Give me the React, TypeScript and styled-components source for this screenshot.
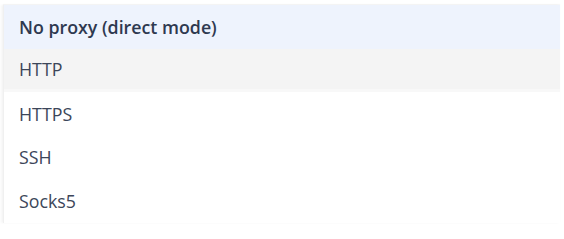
import React from "react";
import styled, { createGlobalStyle } from "styled-components";

const Global = createGlobalStyle`
  html, body { margin: 0; padding: 0; background: #ffffff; }
  body { font-family: "Open Sans", "Noto Sans", sans-serif; }
`;

const Page = styled.div`
  width: 564px;
  height: 239px;
  padding: 5px 4px 0 3px;
  box-sizing: border-box;
`;

const Menu = styled.ul`
  list-style: none;
  margin: 0;
  padding: 0;
  background: #ffffff;
  border-left: 1px solid #f0f0f0;
  box-shadow: -2px 0 2px rgba(0, 0, 0, 0.04), 0 -1px 1px rgba(0, 0, 0, 0.03);
  display: flex;
  flex-direction: column;
`;

const Item = styled.li<{ $state?: "selected" | "hover" }>`
  height: 43.5px;
  display: flex;
  align-items: center;
  padding-left: 15px;
  font-size: 17.8px;
  color: ${(p) => (p.$state === "selected" ? "#2e3950" : "#3c4659")};
  font-weight: ${(p) => (p.$state === "selected" ? 600 : 400)};
  background: ${(p) =>
    p.$state === "selected" ? "#eef3fd" : p.$state === "hover" ? "#f4f4f4" : "#ffffff"};
  border-bottom: ${(p) => (p.$state === "hover" ? "3px solid #f8f8f8" : "none")};
  box-sizing: border-box;
`;

const items: { label: string; state?: "selected" | "hover" }[] = [
  { label: "No proxy (direct mode)", state: "selected" },
  { label: "HTTP", state: "hover" },
  { label: "HTTPS" },
  { label: "SSH" },
  { label: "Socks5" },
];

export default function App() {
  return (
    <>
      <Global />
      <Page>
        <Menu>
          {items.map((it) => (
            <Item key={it.label} $state={it.state}>
              {it.label}
            </Item>
          ))}
        </Menu>
      </Page>
    </>
  );
}
